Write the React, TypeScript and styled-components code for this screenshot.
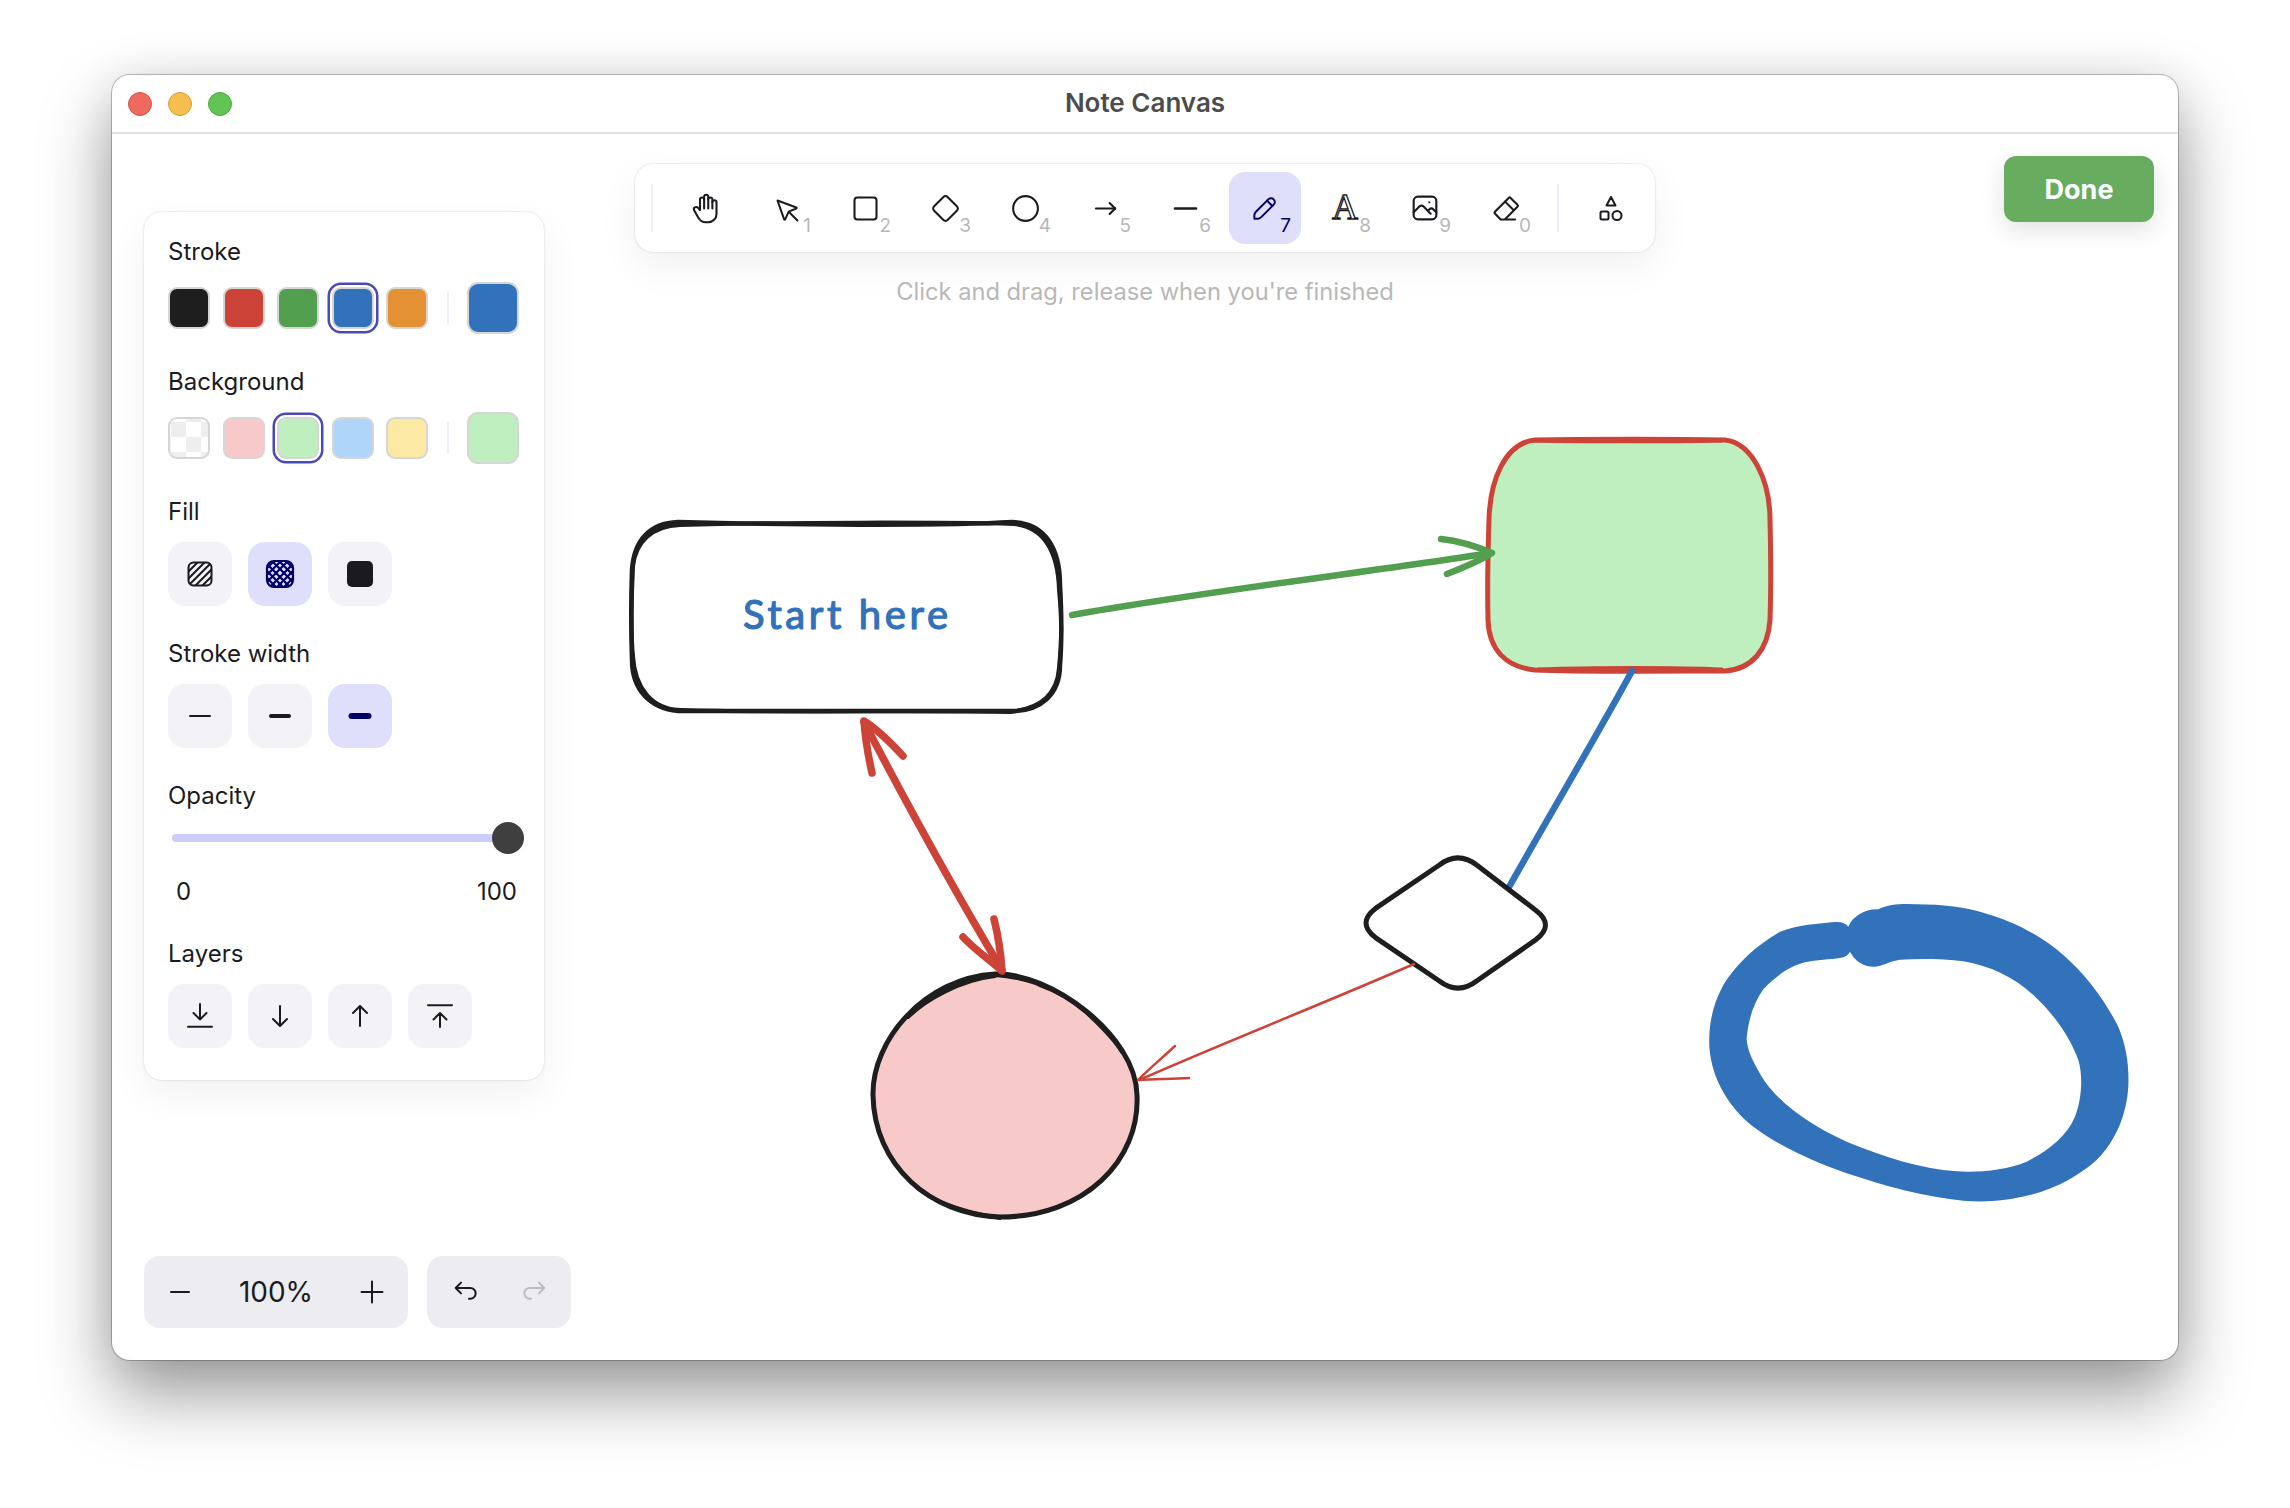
import React from 'react';
import styled, {createGlobalStyle} from 'styled-components';

const GlobalStyle = createGlobalStyle`
	html, body {
		margin: 0;
		padding: 0;
		background: #ffffff;
	}
	body {
		font-family: Inter, "Liberation Sans", sans-serif;
		color: #1b1b1f;
	}
`;

const TextGlyph = styled.span`
	font-family: "Liberation Serif", serif;
	font-size: 36px;
	line-height: 36px;
	margin-top: -2px;
	-webkit-text-fill-color: transparent;
	-webkit-text-stroke: 1.3px #1b1b1f;
`;

const strokeColors = ['#1e1e1e', '#ce4338', '#529f50', '#3272bb', '#e39133'];
const backgroundColors = ['transparent', '#f7c9c9', '#bfefbf', '#afd6fa', '#fce9a3'];

const Icon = ({size = 33, view = 24, width = 1.5, children}: {size?: number; view?: number; width?: number; children: React.ReactNode}) => (
	<svg width={size} height={size} viewBox={`0 0 ${view} ${view}`} fill="none" stroke="currentColor" strokeWidth={width} strokeLinecap="round" strokeLinejoin="round">
		{children}
	</svg>
);

const tools: {key: string; num?: string; active?: boolean; icon: React.ReactNode}[] = [
	{
		key: 'hand',
		icon: (
			<Icon>
				<path d="M8 13v-7.5a1.5 1.5 0 0 1 3 0v6.5" />
				<path d="M11 5.5v-2a1.5 1.5 0 1 1 3 0v8.5" />
				<path d="M14 5.5a1.5 1.5 0 0 1 3 0v6.5" />
				<path d="M17 7.5a1.5 1.5 0 0 1 3 0v8.5a6 6 0 0 1 -6 6h-2h.208a6 6 0 0 1 -5.012 -2.7a69.74 69.74 0 0 1 -.196 -.3c-.312 -.479 -1.407 -2.388 -3.286 -5.728a1.5 1.5 0 0 1 .536 -2.022a1.867 1.867 0 0 1 2.28 .28l1.47 1.47" />
			</Icon>
		)
	},
	{
		key: 'select',
		num: '1',
		icon: (
			<Icon size={35} view={22} width={1.25}>
				<path d="M6 6l4.153 11.793a0.365 .365 0 0 0 .331 .207a0.366 .366 0 0 0 .332 -.207l2.184 -4.793l4.787 -1.994a0.355 .355 0 0 0 .213 -.323a0.355 .355 0 0 0 -.213 -.323l-11.787 -4.36z" />
				<path d="M13.5 13.5l5 5" />
			</Icon>
		)
	},
	{
		key: 'rect',
		num: '2',
		icon: (
			<Icon>
				<rect x="4" y="4" width="16" height="16" rx="2" />
			</Icon>
		)
	},
	{
		key: 'diamond',
		num: '3',
		icon: (
			<Icon>
				<path d="M10.5 20.4l-6.9 -6.9c-.781 -.781 -.781 -2.219 0 -3l6.9 -6.9c.781 -.781 2.219 -.781 3 0l6.9 6.9c.781 .781 .781 2.219 0 3l-6.9 6.9c-.781 .781 -2.219 .781 -3 0z" />
			</Icon>
		)
	},
	{
		key: 'circle',
		num: '4',
		icon: (
			<Icon>
				<circle cx="12" cy="12" r="9" />
			</Icon>
		)
	},
	{
		key: 'arrow',
		num: '5',
		icon: (
			<Icon>
				<path d="M5 12h14" />
				<path d="M15 16l4 -4" />
				<path d="M15 8l4 4" />
			</Icon>
		)
	},
	{
		key: 'line',
		num: '6',
		icon: (
			<Icon size={33} view={33} width={2.6}>
				<path d="M6 16.5h21" />
			</Icon>
		)
	},
	{
		key: 'pencil',
		num: '7',
		active: true,
		icon: (
			<Icon size={32} view={20} width={1.25}>
				<path d="m7.643 15.69 7.774-7.773a2.357 2.357 0 1 0-3.334-3.334L4.31 12.357a3.333 3.333 0 0 0-.977 2.357v1.953h1.953c.884 0 1.732-.352 2.357-.977Z" />
				<path d="m11.25 5.417 3.333 3.333" />
			</Icon>
		)
	},
	{key: 'text', num: '8', icon: <TextGlyph>A</TextGlyph>},
	{
		key: 'image',
		num: '9',
		icon: (
			<Icon size={34}>
				<path d="M15 8h.01" />
				<rect x="4" y="4" width="16" height="16" rx="3" />
				<path d="M4 15l4 -4a3 5 0 0 1 3 0l5 5" />
				<path d="M14 14l1 -1a3 5 0 0 1 3 0l2 2" />
			</Icon>
		)
	},
	{
		key: 'eraser',
		num: '0',
		icon: (
			<Icon>
				<path d="M19 20h-10.5l-4.21 -4.3a1 1 0 0 1 0 -1.41l10 -10a1 1 0 0 1 1.41 0l5 5a1 1 0 0 1 0 1.41l-9.2 9.3" />
				<path d="M18 13.3l-6.3 -6.3" />
			</Icon>
		)
	}
];

function Hachure() {
	return (
		<svg width="28" height="28" viewBox="0 0 28 28" fill="none" stroke="currentColor">
			<clipPath id="hachure-clip">
				<rect x="2.5" y="2.5" width="23" height="23" rx="5" />
			</clipPath>
			<g clipPath="url(#hachure-clip)" strokeWidth="2">
				<path d="M-3 10 10 -3M-3 17 17 -3M-3 24 24 -3M-3 31 31 -3M4 31 31 4M11 31 31 11M18 31 31 18" />
			</g>
			<rect x="2.5" y="2.5" width="23" height="23" rx="5" strokeWidth="2" />
		</svg>
	);
}

function CrossHatch() {
	return (
		<svg width="30" height="30" viewBox="0 0 30 30" fill="none" stroke="currentColor">
			<clipPath id="cross-clip">
				<rect x="2" y="2" width="26" height="26" rx="7" />
			</clipPath>
			<g clipPath="url(#cross-clip)" strokeWidth="2.2">
				<path d="M-4 8 8 -4M-4 15 15 -4M-4 22 22 -4M-4 29 29 -4M3 30 34 -1M10 30 34 6M17 30 34 13M24 30 34 20" />
				<path d="M22 -4 34 8M15 -4 34 15M8 -4 34 22M1 -4 34 29M-4 -1 31 34M-4 6 24 34M-4 13 17 34M-4 20 10 34" />
			</g>
			<rect x="2" y="2" width="26" height="26" rx="7" strokeWidth="2.2" />
		</svg>
	);
}

function SolidFill() {
	return (
		<svg width="28" height="28" viewBox="0 0 28 28">
			<rect x="1" y="1" width="26" height="26" rx="5" fill="currentColor" />
		</svg>
	);
}

function WidthLine({weight, length}: {weight: number; length: number}) {
	return (
		<svg width="28" height="28" viewBox="0 0 28 28">
			<line x1={14 - length / 2} x2={14 + length / 2} y1="14" y2="14" stroke="currentColor" strokeWidth={weight} strokeLinecap="round" />
		</svg>
	);
}

const layerIcons = [
	'M4 26.7h24M16 4v15.5M9.5 13l6.5 6.5 6.5-6.5',
	'M16 6v20M9 19l7 7 7-7',
	'M16 26V6M9 13l7-7 7 7',
	'M4 5.3h24M16 27V13M9.5 19.5l6.5-6.5 6.5 6.5'
];

function Drawing() {
	return (
		<Canvas viewBox="112 134 2066 1226" fill="none" strokeLinecap="round" strokeLinejoin="round">
			{/* start box */}
			<path stroke="#1e1e1e" strokeWidth="4.5" d="M678 522C780 525 950 526 1012 522C1045 523 1060 548 1060 585C1062 620 1062 640 1060 665C1060 695 1040 711 1012 711C930 712 760 710 678 711C650 708 632 690 632 660C631 630 631 600 632 570C634 540 650 523 678 522Z" />
			<path stroke="#1e1e1e" strokeWidth="4" d="M680 525C790 522 940 522 1014 524C1044 527 1058 552 1059 590C1063 625 1061 650 1059 668C1057 694 1042 708 1010 712C930 710 770 713 682 710C652 710 635 688 633 656C630 625 632 595 633 566C636 542 652 526 680 525Z" />
			<StartText x="743" y="629" textLength="205">Start here</StartText>

			{/* green box */}
			<path fill="#bfefbf" d="M1535 441C1580 440 1680 441 1725 441C1752 445 1769 480 1769 520L1769 620C1767 650 1751 668 1725 670C1680 669 1580 670 1535 670C1508 666 1489 650 1489 620L1489 520C1489 480 1505 444 1535 441Z" />
			<path stroke="#ce4338" strokeWidth="5" d="M1535 440C1580 439 1680 439 1725 440C1752 443 1770 480 1770 520C1771 560 1771 590 1770 620C1768 650 1752 669 1725 671C1680 671 1580 672 1535 670C1506 667 1489 650 1488 620C1487 580 1488 550 1489 520C1490 480 1505 443 1535 440Z" />
			<path stroke="#ce4338" strokeWidth="3" d="M1538 669C1590 667 1680 667 1722 669M1530 441C1590 442 1670 442 1722 441" />

			{/* blue connector */}
			<path stroke="#3272bb" strokeWidth="6.5" d="M1632 671C1600 730 1540 832 1509 887" />

			{/* diamond */}
			<path fill="#ffffff" stroke="#1e1e1e" strokeWidth="5" d="M1439 865.2Q1458 850.6 1477 865.2L1536 910.4Q1555 925 1536 939.6L1477 980.8Q1458 995.4 1439 980.8L1375.5 937.6Q1356.5 923 1375.5 908.4Z" />

			{/* pink circle */}
			<path fill="#f7c9c9" stroke="#1e1e1e" strokeWidth="5" d="M995 974C1050 972 1136 1035 1137 1095C1140 1160 1085 1217 1000 1217C930 1215 874 1165 873 1095C872 1040 925 978 995 974Z" />
			<path stroke="#1e1e1e" strokeWidth="4" d="M995 976C960 980 925 1000 908 1017M995 975C1010 976 1030 980 1040 985C1060 992 1075 1002 1086 1012C1100 1025 1115 1040 1122 1052M911 1182C925 1197 950 1210 1000 1218" />

			{/* arrows */}
			<g stroke="#529f50" strokeWidth="6.5">
				<path d="M1072 615C1200 592 1370 572 1491 553" />
				<path d="M1441 539C1460 541 1478 547 1492 553C1478 562 1462 568 1447 574" />
			</g>
			<g stroke="#ce4338" strokeWidth="7.5">
				<path d="M864 722C910 810 960 900 1002 970" />
				<path d="M872 773C868 755 865 735 864 721C878 730 892 744 903 756" />
				<path d="M994 919C998 935 1001 955 1002 971C990 960 975 950 963 937" />
			</g>
			<g stroke="#ce4338" strokeWidth="2.5">
				<path d="M1414 964C1320 1005 1230 1040 1139 1080" />
				<path d="M1175 1046C1162 1058 1148 1070 1138 1080C1155 1079 1172 1079 1189 1078" />
			</g>

			{/* free draw */}
			<path
				transform="translate(1680 880) scale(.3333)"
				fill="#3272bb"
				fillRule="evenodd"
				d="M505 140C520 105 560 85 595 88C620 75 650 72 680 72C760 73 830 75 900 95C1000 122 1080 165 1150 225C1220 285 1280 370 1315 440C1340 500 1348 560 1345 620C1340 700 1310 780 1250 840C1200 885 1130 925 1050 945C980 962 920 968 850 962C740 952 620 920 500 880C400 845 300 800 220 740C150 685 95 600 88 500C85 430 100 370 130 315C170 250 230 195 300 155C350 135 420 130 465 126C485 125 498 130 505 140ZM510 215C525 245 555 262 585 260C610 258 630 243 660 239C720 236 790 236 850 244C930 258 1000 290 1060 345C1120 400 1170 470 1195 540C1210 590 1205 660 1185 710C1160 770 1100 815 1040 845C980 870 900 878 830 874C720 866 610 830 500 785C400 740 310 680 255 605C225 560 200 510 200 475C205 420 220 370 250 328C285 290 330 258 375 247C410 240 450 238 480 234C495 232 505 225 510 215Z"
			/>
		</Canvas>
	);
}

export default function App() {
	return (
		<Page>
			<GlobalStyle />
			<Window>
				<TitleBar>
					<Lights>
						<Light $color="#ee6a5f" $edge="#d65045" />
						<Light $color="#f5bf4f" $edge="#d69e33" />
						<Light $color="#61c454" $edge="#4ba63f" />
					</Lights>
					<WindowTitle>Note Canvas</WindowTitle>
				</TitleBar>
				<Workspace>
					<Drawing />
					<LeftColumn>
						<Panel>
							<Section>
								<Label>Stroke</Label>
								<SwatchRow>
									{strokeColors.map((c, i) => (
										<Swatch key={c} $color={c} $selected={i === 3} />
									))}
									<RowDivider />
									<BigSwatch $color="#3272bb" />
								</SwatchRow>
							</Section>
							<Section>
								<Label>Background</Label>
								<SwatchRow>
									{backgroundColors.map((c, i) => (
										<Swatch key={c} $color={c} $selected={i === 2} />
									))}
									<RowDivider />
									<BigSwatch $color="#bfefbf" />
								</SwatchRow>
							</Section>
							<Section>
								<Label>Fill</Label>
								<ButtonRow>
									<SquareButton><Hachure /></SquareButton>
									<SquareButton $active><CrossHatch /></SquareButton>
									<SquareButton><SolidFill /></SquareButton>
								</ButtonRow>
							</Section>
							<Section>
								<Label>Stroke width</Label>
								<ButtonRow>
									<SquareButton><WidthLine weight={2} length={20} /></SquareButton>
									<SquareButton><WidthLine weight={4} length={18} /></SquareButton>
									<SquareButton $active><WidthLine weight={6} length={17} /></SquareButton>
								</ButtonRow>
							</Section>
							<OpacitySection>
								<Label>Opacity</Label>
								<Slider>
									<SliderTrack />
									<SliderThumb />
								</Slider>
								<SliderRange>
									<span>0</span>
									<span>100</span>
								</SliderRange>
							</OpacitySection>
							<Section>
								<Label>Layers</Label>
								<ButtonRow>
									{layerIcons.map((d) => (
										<SquareButton key={d}>
											<Icon size={32} view={32} width={2}>
												<path d={d} />
											</Icon>
										</SquareButton>
									))}
								</ButtonRow>
							</Section>
						</Panel>
						<BottomBar>
							<ZoomGroup>
								<Icon size={32} view={32} width={2}>
									<path d="M7 16h18" />
								</Icon>
								<ZoomValue>100%</ZoomValue>
								<Icon size={32} view={32} width={2}>
									<path d="M5.5 16h21M16 5.5v21" />
								</Icon>
							</ZoomGroup>
							<HistoryGroup>
								<Icon size={32} view={24} width={1.5}>
									<path d="M9 13l-4 -4l4 -4m-4 4h11a4 4 0 0 1 0 8h-1" />
								</Icon>
								<RedoIcon>
									<Icon size={32} view={24} width={1.5}>
										<path d="M15 13l4 -4l-4 -4m4 4h-11a4 4 0 0 0 0 8h1" />
									</Icon>
								</RedoIcon>
							</HistoryGroup>
						</BottomBar>
					</LeftColumn>
					<CenterColumn>
						<Toolbar>
							<ToolDivider />
							{tools.map((tool) => (
								<ToolButton key={tool.key} $active={tool.active}>
									{tool.icon}
									{tool.num && <ToolNumber $active={tool.active}>{tool.num}</ToolNumber>}
								</ToolButton>
							))}
							<ToolDivider />
							<ToolButton>
								<Icon size={26} view={26} width={2}>
									<path d="M13 2l4.5 8.5h-9z" />
									<rect x="2.5" y="16.5" width="8" height="8" rx="1.5" />
									<circle cx="19" cy="20.5" r="4.5" />
								</Icon>
							</ToolButton>
						</Toolbar>
						<Hint>Click and drag, release when you're finished</Hint>
					</CenterColumn>
					<RightColumn>
						<DoneButton>Done</DoneButton>
					</RightColumn>
				</Workspace>
			</Window>
		</Page>
	);
}

const Page = styled.div`
	width: 2290px;
	height: 1508px;
	padding: 75px 112px 148px;
	box-sizing: border-box;
	overflow: hidden;
	background: #ffffff;
`;

const Window = styled.div`
	width: 2066px;
	height: 1285px;
	display: flex;
	flex-direction: column;
	background: #ffffff;
	border-radius: 18px;
	box-shadow:
		0 0 0 1px rgba(0, 0, 0, 0.18),
		0 0 1px 1px rgba(0, 0, 0, 0.08),
		0 34px 70px rgba(0, 0, 0, 0.4),
		0 0 44px rgba(0, 0, 0, 0.08);
`;

const TitleBar = styled.div`
	position: relative;
	height: 57px;
	box-sizing: content-box;
	flex: none;
	display: flex;
	align-items: center;
	justify-content: center;
	border-bottom: 2px solid #e2e2e2;
`;

const Lights = styled.div`
	position: absolute;
	left: 16px;
	top: 17px;
	display: flex;
	gap: 16px;
`;

const Light = styled.div<{$color: string; $edge: string}>`
	width: 24px;
	height: 24px;
	box-sizing: border-box;
	border-radius: 50%;
	background: ${(p) => p.$color};
	border: 1px solid ${(p) => p.$edge};
`;

const WindowTitle = styled.div`
	font-size: 26px;
	line-height: 30px;
	margin-bottom: 2px;
	font-weight: 600;
	color: #4c4c4c;
`;

const Workspace = styled.div`
	position: relative;
	flex: 1;
	display: grid;
	grid-template-columns: 491px 1020px 1fr;
	padding: 22px 24px 32px 32px;
	min-height: 0;
`;

const Canvas = styled.svg`
	position: absolute;
	left: 0;
	top: 0;
	width: 2066px;
	height: 1226px;
`;

const StartText = styled.text`
	font-family: Lato, "Open Sans", sans-serif;
	font-size: 40px;
	fill: #3272bb;
	stroke: #3272bb;
	stroke-width: 1.2;
`;

const LeftColumn = styled.div`
	position: relative;
	display: flex;
	flex-direction: column;
	justify-content: space-between;
	padding-top: 56px;
`;

const Panel = styled.div`
	width: 400px;
	box-sizing: border-box;
	padding: 24px 24px 32px;
	display: flex;
	flex-direction: column;
	gap: 32px;
	background: #ffffff;
	border-radius: 18px;
	box-shadow:
		0 0 2px rgba(0, 0, 0, 0.2),
		0 14px 40px rgba(0, 0, 0, 0.06);
`;

const Section = styled.div`
	display: flex;
	flex-direction: column;
	gap: 16px;
`;

const OpacitySection = styled.div`
	display: flex;
	flex-direction: column;
`;

const Label = styled.div`
	font-size: 24px;
	line-height: 30px;
	padding-top: 0.7px;
	margin-bottom: -0.7px;
	color: #1b1b1f;
`;

const SwatchRow = styled.div`
	height: 52px;
	display: flex;
	align-items: center;
	gap: 12.5px;
`;

const Swatch = styled.div<{$color: string; $selected?: boolean}>`
	width: 42px;
	height: 42px;
	box-sizing: border-box;
	border: 2px solid #d6d6d6;
	border-radius: 9px;
	background: ${(p) =>
		p.$color === 'transparent'
			? 'repeating-conic-gradient(#ffffff 0 25%, #eeeeee 0 50%) 1px 3px / 30px 30px'
			: p.$color};
	box-shadow: ${(p) => (p.$selected ? '0 0 0 2px #ffffff, 0 0 0 4.5px #4a4ab5' : 'none')};
`;

const RowDivider = styled.div`
	width: 2px;
	height: 32px;
	margin: 0 6px 0 6px;
	background: #eeeefb;
`;

const BigSwatch = styled.div<{$color: string}>`
	width: 52px;
	height: 52px;
	box-sizing: border-box;
	border: 2px solid #d6d6d6;
	border-radius: 11px;
	background: ${(p) => p.$color};
`;

const ButtonRow = styled.div`
	display: flex;
	gap: 16px;
`;

const SquareButton = styled.div<{$active?: boolean}>`
	width: 64px;
	height: 64px;
	display: flex;
	align-items: center;
	justify-content: center;
	border-radius: 17px;
	background: ${(p) => (p.$active ? '#e0dffb' : '#f2f2f7')};
	color: ${(p) => (p.$active ? '#030064' : '#1b1b1f')};
`;

const Slider = styled.div`
	height: 32px;
	margin: 12px -4px 0 4px;
	display: flex;
	align-items: center;
`;

const SliderTrack = styled.div`
	flex: 1;
	height: 8px;
	border-radius: 4px;
	background: #cdcdf9;
`;

const SliderThumb = styled.div`
	width: 32px;
	height: 32px;
	flex: none;
	margin-left: -16px;
	border-radius: 50%;
	background: #3f3f3f;
`;

const SliderRange = styled.div`
	margin-top: 23px;
	margin-bottom: -1px;
	padding: 0 3px 0 8px;
	display: flex;
	justify-content: space-between;
	font-size: 24px;
	line-height: 30px;
`;

const BottomBar = styled.div`
	display: flex;
	gap: 19px;
`;

const ZoomGroup = styled.div`
	width: 264px;
	height: 72px;
	box-sizing: border-box;
	padding: 0 20px;
	display: flex;
	align-items: center;
	justify-content: space-between;
	border-radius: 16px;
	background: #ececf1;
	color: #1b1b1f;
`;

const ZoomValue = styled.div`
	font-size: 28px;
`;

const HistoryGroup = styled.div`
	width: 144px;
	height: 72px;
	box-sizing: border-box;
	padding: 0 20px 0 22px;
	display: flex;
	align-items: center;
	justify-content: space-between;
	border-radius: 16px;
	background: #ececf1;
	color: #1b1b1f;
`;

const RedoIcon = styled.div`
	display: flex;
	color: #bdbdbd;
`;

const CenterColumn = styled.div`
	position: relative;
	display: flex;
	flex-direction: column;
	align-items: center;
	padding-top: 8px;
`;

const Toolbar = styled.div`
	width: 1020px;
	height: 88px;
	box-sizing: border-box;
	padding: 8px;
	display: flex;
	align-items: center;
	gap: 8px;
	background: #ffffff;
	border-radius: 18px;
	box-shadow:
		0 0 2px rgba(0, 0, 0, 0.2),
		0 14px 40px rgba(0, 0, 0, 0.06);
`;

const ToolDivider = styled.div`
	width: 2px;
	height: 48px;
	margin: 0 8px;
	flex: none;
	background: #ececfb;
`;

const ToolButton = styled.div<{$active?: boolean}>`
	position: relative;
	width: 72px;
	height: 72px;
	flex: none;
	display: flex;
	align-items: center;
	justify-content: center;
	border-radius: 16px;
	background: ${(p) => (p.$active ? '#e0dffb' : 'transparent')};
	color: ${(p) => (p.$active ? '#030064' : '#1b1b1f')};
`;

const ToolNumber = styled.span<{$active?: boolean}>`
	position: absolute;
	right: 10px;
	bottom: 9px;
	font-size: 19px;
	line-height: 18px;
	color: ${(p) => (p.$active ? '#030064' : '#b8b8b8')};
`;

const Hint = styled.div`
	margin-top: 25px;
	font-size: 23.7px;
	line-height: 30px;
	color: #b8b8b8;
`;

const RightColumn = styled.div`
	position: relative;
	display: flex;
	justify-content: flex-end;
	align-items: flex-start;
`;

const DoneButton = styled.div`
	width: 150px;
	height: 66px;
	display: flex;
	align-items: center;
	justify-content: center;
	border-radius: 12px;
	background: #68ad5f;
	color: #ffffff;
	font-size: 27px;
	font-weight: 700;
	box-shadow: 0 8px 24px rgba(0, 0, 0, 0.12);
`;
